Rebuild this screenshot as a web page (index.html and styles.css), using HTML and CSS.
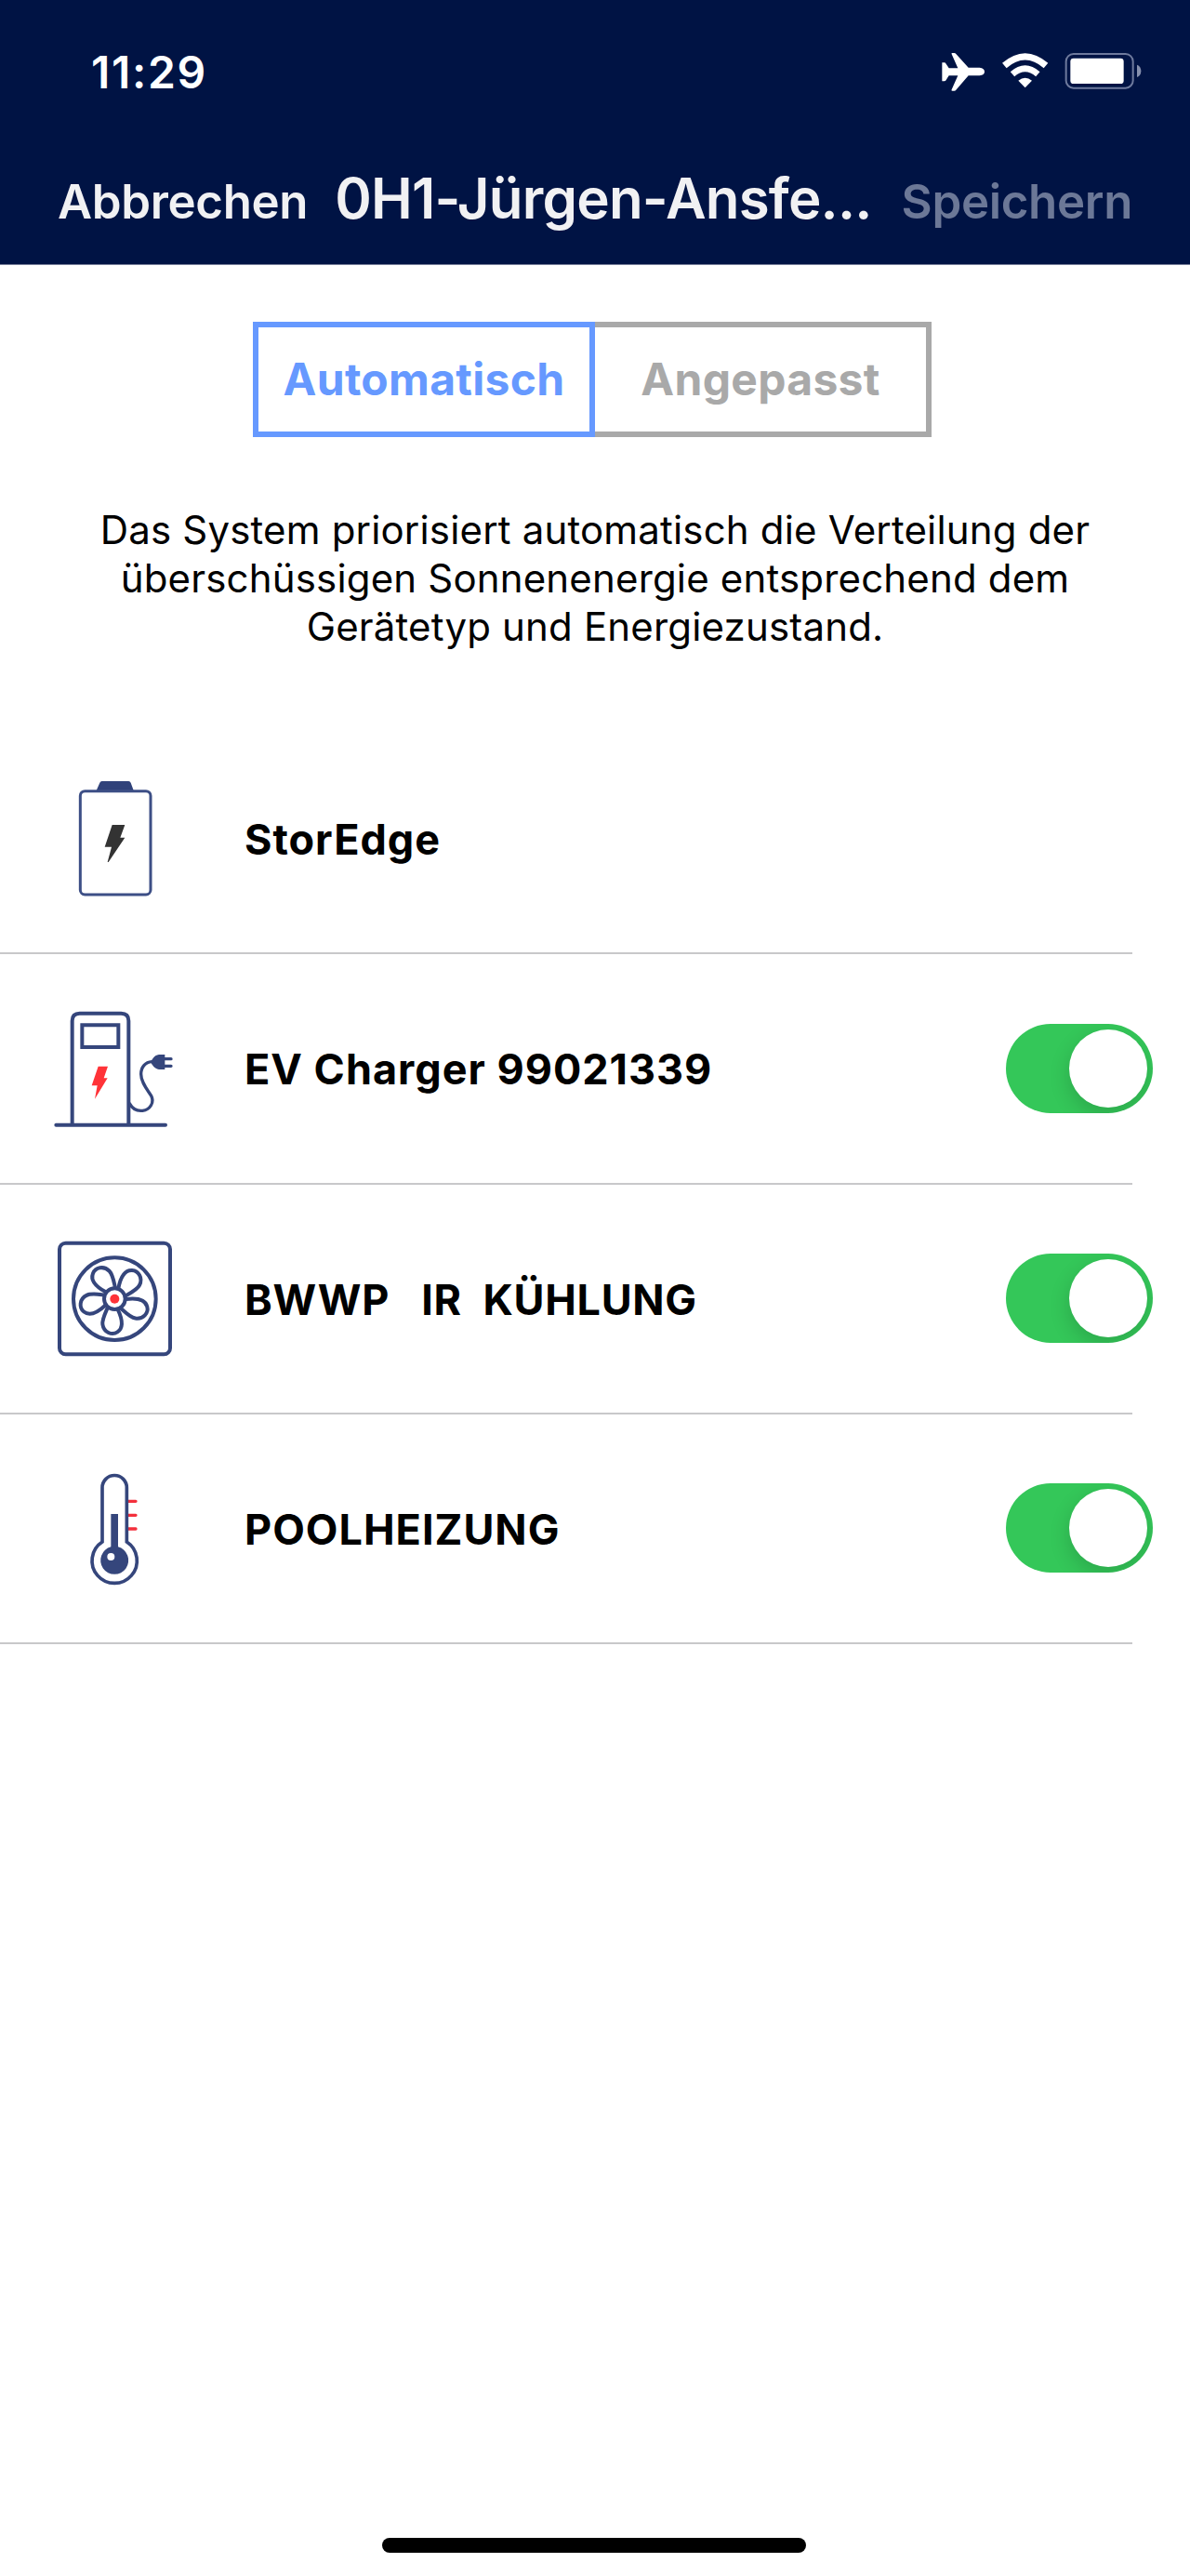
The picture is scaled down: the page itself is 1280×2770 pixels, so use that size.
FILE: index.html
```html
<!DOCTYPE html>
<html lang="de">
<head>
<meta charset="utf-8">
<title>Energieverteilung</title>
<link rel="stylesheet" href="styles.css">
</head>
<body>
<header class="header">
  <div class="status">
    <span class="time">11:29</span>
    <svg class="status-icons" viewBox="99 81 645 123" width="215" height="41">
      <path fill="#fff" d="M100 112h7q4 0 6 4l9 14h29L131 85q-2-4 2-4h6q4 0 6 3l40 44h36q16 2 16 13t-16 13h-36l-40 46q-2 3-6 3h-6q-4 0-2-4l20-45h-29l-9 14q-2 4-6 4h-7z"/>
      <g fill="none" stroke="#fff">
        <path stroke-width="21" d="M301 121.500q67-58 134 0"/>
        <path stroke-width="20" d="M327 149q41-36 82 0"/>
      </g>
      <path fill="#fff" d="M346 170q22-17 44 0l-22 23z"/>
      <rect x="500" y="84" width="216" height="110" rx="24" fill="none" stroke="#6e7a9d" stroke-width="6"/>
      <rect x="514" y="98" width="172" height="82" rx="10" fill="#fff"/>
      <path fill="#8690ad" d="M729 119q13 5 13 20t-13 20z"/>
    </svg>
  </div>
  <nav class="nav">
    <span class="action cancel">Abbrechen</span>
    <h1 class="title">0H1-Jürgen-Ansfe...</h1>
    <span class="action save">Speichern</span>
  </nav>
</header>
<main>
  <div class="segments">
    <div class="segment active">Automatisch</div>
    <div class="segment">Angepasst</div>
  </div>
  <p class="intro">Das System priorisiert automatisch die Verteilung der<br>überschüssigen Sonnenenergie entsprechend dem<br>Gerätetyp und Energiezustand.</p>
  <ul class="devices">
    <li class="device">
      <svg class="icon" viewBox="0 6 480 480">
        <path fill="#30427a" d="M190 92l12-27q2-5 7-5h86q5 0 7 5l10 27z"/>
        <rect x="139" y="92" width="227" height="334" rx="15" fill="none" stroke="#3d4f86" stroke-width="9"/>
        <path fill="#333" d="M242 201h41l-15 41h15l-53 79h-3l13-49h-22z"/>
      </svg>
      <span class="name">StorEdge</span>
    </li>
    <li class="device">
      <svg class="icon" viewBox="0 -3 480 480">
        <g fill="none" stroke="#35467c" stroke-width="12" stroke-linecap="round">
          <path d="M61 419h353M113 417V83q0-24 24-24h134q24 0 24 24v334"/>
          <path d="M145 97h117v71H145z" stroke-linecap="butt"/>
          <path stroke-width="10" d="M298 350c11 20 25 25 42 23 25-3 39-28 28-48-14-22-33-44-33-70 0-23 14-39 35-40M410 206h22M410 229h22"/>
        </g>
        <path fill="#35467c" d="M412 192v48h-19q-12-1-21-14-9-10 0-20 9-13 21-14z"/>
        <path fill="#ff3338" d="M197 230h31l-13 38h12l-41 67 8-43h-18z"/>
      </svg>
      <span class="name">EV Charger 99021339</span>
      <span class="toggle"><span class="knob"></span></span>
    </li>
    <li class="device">
      <svg class="icon" viewBox="0 -11 480 480">
        <g fill="none" stroke="#35467c" stroke-width="12">
          <rect x="72" y="51" width="357" height="359" rx="20"/>
          <circle cx="250" cy="231" r="133"/>
          <circle cx="250" cy="231" r="34"/>
          <path d="M262 197C270 155 286 138 306 139c21 1 36 25 24 48-7 14-29 25-46 35"/>
          <path d="M262 197C270 155 286 138 306 139c21 1 36 25 24 48-7 14-29 25-46 35" transform="rotate(72 250 231)"/>
          <path d="M262 197C270 155 286 138 306 139c21 1 36 25 24 48-7 14-29 25-46 35" transform="rotate(144 250 231)"/>
          <path d="M262 197C270 155 286 138 306 139c21 1 36 25 24 48-7 14-29 25-46 35" transform="rotate(216 250 231)"/>
          <path d="M262 197C270 155 286 138 306 139c21 1 36 25 24 48-7 14-29 25-46 35" transform="rotate(288 250 231)"/>
        </g>
        <circle cx="250" cy="231" r="15" fill="#ff3338"/>
      </svg>
      <span class="name wide">BWWP&nbsp;&nbsp; IR&nbsp; KÜHLUNG</span>
      <span class="toggle"><span class="knob"></span></span>
    </li>
    <li class="device">
      <svg class="icon" viewBox="0 11 480 480">
        <path stroke="#f3303c" stroke-width="10" stroke-linecap="round" d="M292 165h26M292 210h26M292 254h26"/>
        <path fill="#fff" stroke="#35467c" stroke-width="11" d="M210 296V121a39.500 39.500 0 0 1 79 0v175a72.500 72.500 0 1 1-79 0z"/>
        <path fill="#35467c" d="M238 206h23v106a45 45 0 1 1-23 0z"/>
        <circle cx="238" cy="344" r="12" fill="#fff"/>
      </svg>
      <span class="name">POOLHEIZUNG</span>
      <span class="toggle"><span class="knob"></span></span>
    </li>
  </ul>
</main>
<div class="home-bar"></div>
</body>
</html>
```
FILE: styles.css
```css
* {
  box-sizing: border-box;
}

body {
  margin: 0;
  min-height: 2770px;
  display: flex;
  flex-direction: column;
  background: #fff;
  color: #000;
  font-family: Inter, "Liberation Sans", sans-serif;
}

.header {
  height: 285px;
  background: #001344;
  border-bottom: 1px solid #777f9a;
}

.status {
  display: flex;
  justify-content: space-between;
  align-items: center;
  height: 154px;
  padding: 0 52px 0 98px;
}

.time {
  color: #fff;
  font-size: 48px;
  font-weight: 600;
  letter-spacing: 1.7px;
}

.nav {
  display: flex;
  align-items: baseline;
  height: 130px;
  padding: 21px 62px 0 62px;
  color: #f1f1f3;
  line-height: 76px;
  white-space: nowrap;
}

.action {
  font-size: 51px;
  font-weight: 600;
  letter-spacing: -0.35px;
}

.title {
  margin: 0 0 0 29px;
  font-size: 60px;
  font-weight: 600;
  letter-spacing: -0.8px;
}

.save {
  margin-left: auto;
  color: #6c7897;
}

.segments {
  display: flex;
  width: 730px;
  height: 124px;
  margin: 61px 0 0 272px;
}

.segment {
  flex: 1;
  display: flex;
  align-items: center;
  justify-content: center;
  padding-bottom: 2px;
  border: 6px solid #a9a9a9;
  border-left: 0;
  color: #a9a9a9;
  font-size: 48px;
  font-weight: 700;
  letter-spacing: 0.3px;
}

.segment.active {
  flex: 0 0 368px;
  border: 6px solid #6699ff;
  color: #6699ff;
}

.intro {
  margin: 74px 0 0;
  text-align: center;
  font-size: 42px;
  line-height: 52px;
  letter-spacing: 0.17px;
  white-space: nowrap;
}

.devices {
  margin: 79px 0 0;
  padding: 0;
  list-style: none;
}

.device {
  display: flex;
  align-items: center;
  width: 1218px;
  height: 247.25px;
  padding-left: 40px;
  border-bottom: 2px solid #c8c8ca;
}

.icon {
  flex: none;
  width: 160px;
  height: 160px;
  margin-right: 63px;
}

.name {
  padding-top: 2px;
  font-size: 45px;
  font-weight: 700;
  letter-spacing: 1px;
}

.name.wide {
  letter-spacing: 0.7px;
}

.toggle {
  flex: none;
  width: 158px;
  height: 96px;
  margin: 0 -22px 0 auto;
  padding: 6px;
  display: flex;
  justify-content: flex-end;
  overflow: hidden;
  border-radius: 48px;
  background: #34c759;
}

.knob {
  width: 84px;
  height: 84px;
  border-radius: 50%;
  background: #fff;
  box-shadow: 0 8px 22px rgba(0, 0, 0, 0.16);
}

.home-bar {
  width: 456px;
  height: 16px;
  margin: auto auto 25px 411px;
  border-radius: 8px;
  background: #000;
}
```
